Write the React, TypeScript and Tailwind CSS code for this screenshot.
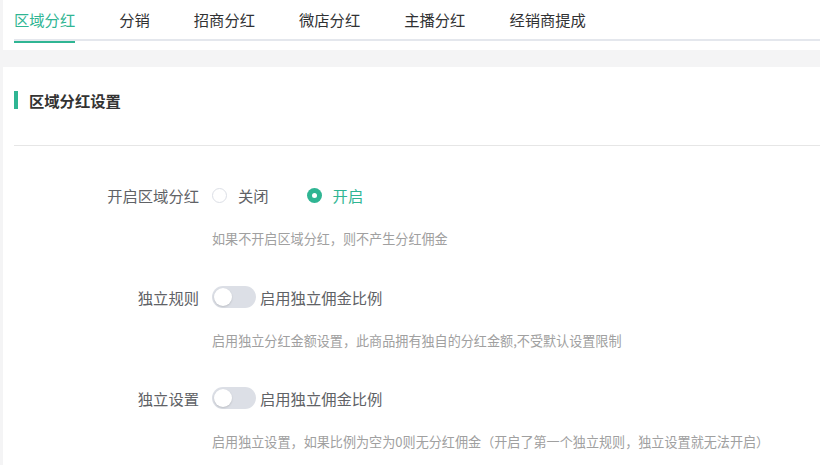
import React from "react";

function Radio({ checked, label }: { checked: boolean; label: string }) {
  return (
    <div className="flex items-center">
      {checked ? (
        <span className="w-[15px] h-[15px] rounded-full bg-[#2fb593] flex items-center justify-center">
          <span className="w-[5px] h-[5px] rounded-full bg-white" />
        </span>
      ) : (
        <span className="w-[15px] h-[15px] rounded-full border border-[#dcdfe6] bg-white" />
      )}
      <span className={"ml-[11px] text-[15.3px] " + (checked ? "text-[#2fb593]" : "text-[#606266]")}>{label}</span>
    </div>
  );
}

function Switch({ label }: { label: string }) {
  return (
    <div className="flex items-center">
      <span className="w-[44px] h-[22px] rounded-full bg-[#dcdfe6] relative flex items-center">
        <span className="ml-[2px] w-[18px] h-[18px] rounded-full bg-white shadow-[0_1px_2px_rgba(0,0,0,0.15)]" />
      </span>
      <span className="ml-[4px] text-[15.3px] text-[#606266]">{label}</span>
    </div>
  );
}

function Row({ label, children, help }: { label: string; children: React.ReactNode; help: string }) {
  return (
    <div>
      <div className="flex items-center h-[32px]">
        <div className="w-[185px] text-right text-[15.3px] text-[#606266]">{label}</div>
        <div className="ml-[13px]">{children}</div>
      </div>
      <div className="mt-[18px] h-[20px] leading-[20px] pl-[198px] text-[13.1px] text-[#a0a0a0] whitespace-nowrap">{help}</div>
    </div>
  );
}

export default function App() {
  const tabs = ["区域分红", "分销", "招商分红", "微店分红", "主播分红", "经销商提成"];
  return (
    <div
      className="w-[820px] h-[465px] overflow-hidden bg-[#f4f4f5] pl-[3px]"
      style={{ fontFamily: '"Noto Sans CJK SC", "Noto Sans", sans-serif' }}
    >
      <div className="bg-white h-[50px] pl-[11px]">
        <div className="relative flex gap-[44px] h-[41px] border-b-2 border-[#e4e7ed]">
          {tabs.map((t, i) => (
            <div
              key={t}
              className={
                "relative h-[41px] flex items-center text-[15.3px] " +
                (i === 0 ? "text-[#2fb593]" : "text-[#303133]")
              }
            >
              <span className="-mt-[2px]">{t}</span>
              {i === 0 && <span className="absolute left-0 right-0 -bottom-[2px] h-[2px] bg-[#2fb593]" />}
            </div>
          ))}
        </div>
      </div>
      <div className="mt-[17px] bg-white h-[400px] pl-[11px]">
        <div className="pt-[24px] h-[78px] flex items-start">
          <div className="flex items-center h-[18px]">
            <span className="w-[4px] h-[18px] bg-[#2fb593]" />
            <span className="ml-[11px] mt-[1px] text-[15.3px] font-bold text-[#333333]">区域分红设置</span>
          </div>
        </div>
        <div className="h-px bg-[#e6e6e6]" />
        <div className="pt-[33px]">
          <Row label="开启区域分红" help="如果不开启区域分红，则不产生分红佣金">
            <div className="flex items-center">
              <Radio checked={false} label="关闭" />
              <div className="ml-[38px]">
                <Radio checked={true} label="开启" />
              </div>
            </div>
          </Row>
          <div className="h-[32px]" />
          <Row label="独立规则" help="启用独立分红金额设置，此商品拥有独自的分红金额,不受默认设置限制">
            <Switch label="启用独立佣金比例" />
          </Row>
          <div className="h-[31px]" />
          <Row label="独立设置" help="启用独立设置，如果比例为空为0则无分红佣金（开启了第一个独立规则，独立设置就无法开启）">
            <Switch label="启用独立佣金比例" />
          </Row>
        </div>
      </div>
    </div>
  );
}
